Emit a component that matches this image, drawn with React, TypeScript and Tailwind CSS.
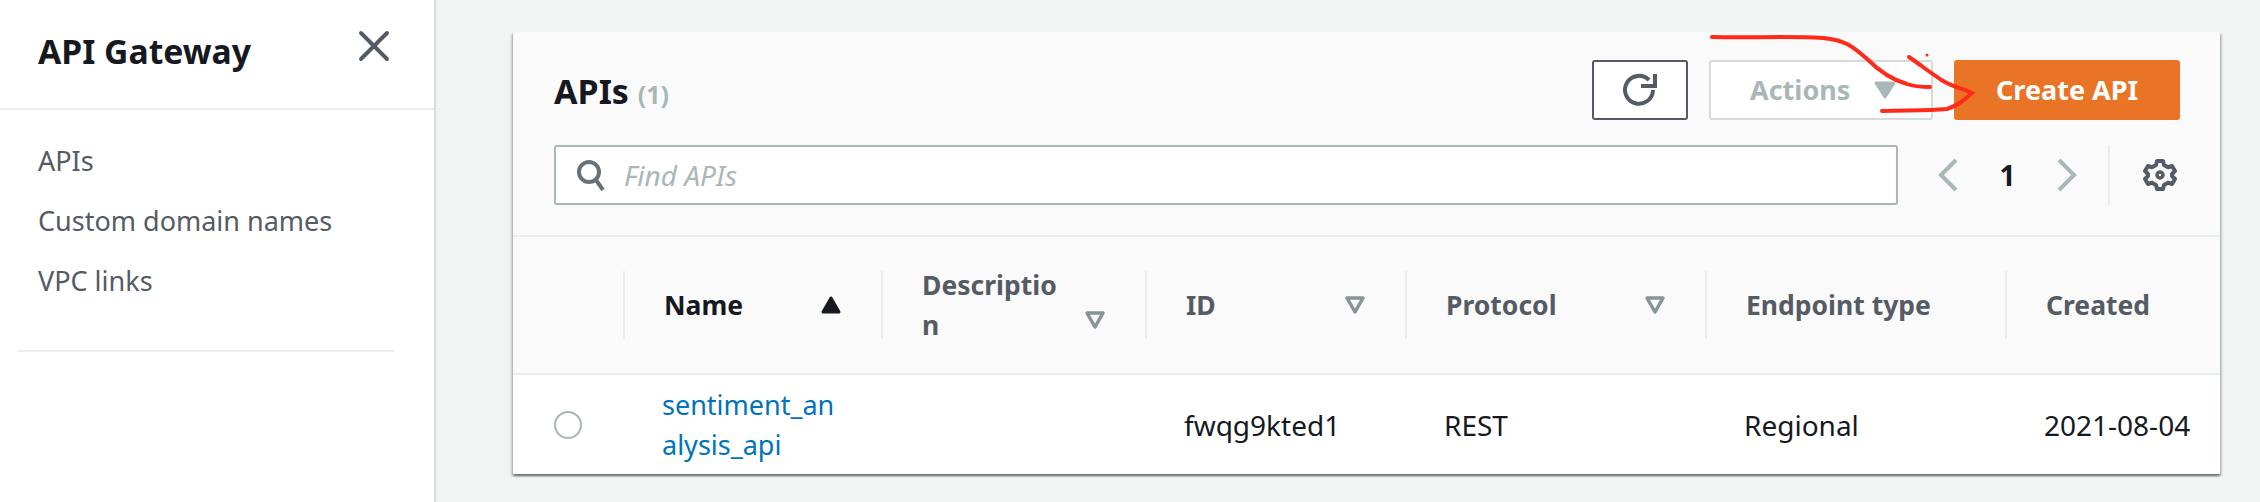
import { X } from "lucide-react";

const font = "font-['Noto_Sans','Liberation_Sans',sans-serif]";

function SortIcon({ active }: { active?: boolean }) {
    if (active) {
        return (
            <svg width="22" height="20" viewBox="0 0 22 20" className="text-[#16191f]">
                <path d="M11 3 L19 17 H3 Z" fill="currentColor" stroke="currentColor" strokeWidth="3" strokeLinejoin="round" />
            </svg>
        );
    }
    return (
        <svg width="22" height="20" viewBox="0 0 22 20" className="text-[#879596]">
            <path d="M3 3 H19 L11 17 Z" fill="none" stroke="currentColor" strokeWidth="3.5" strokeLinejoin="round" />
        </svg>
    );
}

function HeaderCell({ label, sort, dark, wrap }: { label: string, sort?: boolean, dark?: boolean, wrap?: boolean }) {
    return (
        <div className="flex h-[68px] items-center border-l-2 border-[#eaeded] pl-[39px] pr-[39px]">
            <span className={`${wrap ? "w-[140px] break-all" : ""} ${dark ? "text-[#16191f]" : "text-[#545b64]"} text-[26.5px] leading-[40px] font-bold`}>
                {label}
            </span>
            {sort && (
                <span className={`ml-auto ${wrap ? "mt-[30px]" : ""}`}>
                    <SortIcon active={dark} />
                </span>
            )}
        </div>
    );
}

function Annotation() {
    return (
        <svg width="2260" height="502" viewBox="0 0 2260 502" className="pointer-events-none absolute top-0 left-0">
            <path
                d="M1712 37 C1750 38 1790 36 1823 38 C1845 40 1852 46 1866 58 C1880 72 1892 80 1907 84 C1915 87 1922 87 1930 87"
                fill="none"
                stroke="#ff2a1a"
                strokeWidth="4"
                strokeLinecap="round"
            />
            <path
                d="M1909 57 C1922 66 1932 74 1943 81 C1953 87 1964 89 1972 93 C1964 100 1957 106 1947 109 C1925 111 1905 110 1882 111"
                fill="none"
                stroke="#ff2a1a"
                strokeWidth="4"
                strokeLinecap="round"
            />
            <circle cx="1927" cy="55" r="1.5" fill="#ff2a1a" />
        </svg>
    );
}

export default function App() {
    return (
        <div className={`${font} relative flex h-[502px] w-[2260px] overflow-hidden bg-[#f2f3f3]`}>
            <aside className="h-full w-[436px] shrink-0 border-r-2 border-[#d5dbdb] bg-white">
                <div className="flex h-[110px] items-start justify-between border-b-2 border-[#eaeded] pt-[29px] pr-[34px] pl-[38px]">
                    <h2 className="text-[33.7px] leading-[44px] font-bold text-[#16191f]">API Gateway</h2>
                    <X size={52} strokeWidth={1.8} className="-mt-[9px] text-[#545b64]" />
                </div>
                <nav className="mt-[31px] flex flex-col gap-[20px] pl-[38px] text-[27px] leading-[40px] text-[#545b64]">
                    <a>APIs</a>
                    <a>Custom domain names</a>
                    <a>VPC links</a>
                </nav>
                <div className="mt-[49px] ml-[18px] h-[2px] w-[376px] bg-[#eaeded]" />
            </aside>

            <main className="min-w-0 grow pt-[32px] pr-[38px] pl-[77px]">
                <section className="w-[1707px] bg-white shadow-[0_2px_2px_0_rgba(0,28,36,0.45),2px_2px_2px_0_rgba(0,28,36,0.15),-2px_2px_2px_0_rgba(0,28,36,0.15)]">
                    <div className="h-[205px] border-b-2 border-[#eaeded] bg-[#fafafa] pt-[28px] pr-[40px] pl-[41px]">
                        <div className="flex h-[60px] items-center">
                            <h1 className="mt-[3px] grow text-[34px] font-bold text-[#16191f]">
                                APIs <span className="text-[25px] font-bold text-[#aab7b8]">(1)</span>
                            </h1>
                            <button className="flex h-[60px] w-[96px] items-center justify-center rounded-[3px] border-2 border-[#545b64] bg-white">
                                <svg width="38" height="36" viewBox="0 0 38 36" fill="none" stroke="#545b64" strokeWidth="4">
                                    <path d="M28 8 A14 14 0 1 0 32 18" />
                                    <path d="M34 2 V14 H20" />
                                </svg>
                            </button>
                            <button className="ml-[21px] flex h-[60px] w-[224px] items-center gap-[22px] rounded-[3px] border-2 border-[#d5dbdb] bg-white pl-[39px] text-[27px] font-bold text-[#aab7b8]">
                                Actions
                                <svg width="26" height="22" viewBox="0 0 26 22">
                                    <path d="M4 4 H22 L13 18 Z" fill="currentColor" stroke="currentColor" strokeWidth="3" strokeLinejoin="round" />
                                </svg>
                            </button>
                            <button className="ml-[21px] h-[60px] w-[226px] rounded-[3px] bg-[#ea7426] text-[27px] font-bold text-white">
                                Create API
                            </button>
                        </div>
                        <div className="mt-[25px] flex h-[60px] items-center">
                            <div className="flex h-[60px] w-[1344px] items-center rounded-[3px] border-2 border-[#aab7b8] bg-white pl-[20px]">
                                <svg width="30" height="32" viewBox="0 0 30 32" fill="none" stroke="#687078" strokeWidth="4">
                                    <circle cx="13" cy="13" r="10" />
                                    <path d="M20 21 L27 31" />
                                </svg>
                                <span className="ml-[18px] text-[28px] text-[#aab7b8] italic">Find APIs</span>
                            </div>
                            <svg width="22" height="34" viewBox="0 0 22 34" fill="none" stroke="#aab7b8" strokeWidth="4" className="ml-[39px]">
                                <path d="M19 2 L4 17 L19 32" />
                            </svg>
                            <span className="w-[97px] text-center text-[28px] font-bold text-[#16191f]">1</span>
                            <svg width="22" height="34" viewBox="0 0 22 34" fill="none" stroke="#aab7b8" strokeWidth="4">
                                <path d="M3 2 L18 17 L3 32" />
                            </svg>
                            <div className="ml-[30px] h-[60px] w-[2px] bg-[#eaeded]" />
                            <svg width="34" height="34" viewBox="0 0 34 34" fill="none" stroke="#545b64" strokeWidth="4" strokeLinejoin="round" className="ml-[33px]">
                                <path d="M14 3 H20 L21 7 L25 9.3 L29 8 L32 13 L29 16 V18 L32 21 L29 26 L25 24.7 L21 27 L20 31 H14 L13 27 L9 24.7 L5 26 L2 21 L5 18 V16 L2 13 L5 8 L9 9.3 L13 7 Z" />
                                <circle cx="17" cy="17" r="3" strokeWidth="3.5" />
                            </svg>
                        </div>
                    </div>

                    <div className="grid grid-cols-[110px_258px_264px_260px_300px_300px_215px] items-center border-b-2 border-[#eaeded] bg-[#fafafa] py-[34px]">
                        <div />
                        <HeaderCell label="Name" sort dark />
                        <HeaderCell label="Description" sort wrap />
                        <HeaderCell label="ID" sort />
                        <HeaderCell label="Protocol" sort />
                        <HeaderCell label="Endpoint type" />
                        <HeaderCell label="Created" />
                    </div>

                    <div className="grid h-[99px] grid-cols-[110px_258px_264px_260px_300px_300px_215px] items-center text-[28px] text-[#16191f]">
                        <div className="pl-[41px]">
                            <div className="h-[28px] w-[28px] rounded-full border-2 border-[#aab7b8] bg-white" />
                        </div>
                        <a className="w-[219px] pl-[39px] text-[27px] leading-[40px] break-all text-[#0073bb]">sentiment_analysis_api</a>
                        <div />
                        <div className="pl-[39px]">fwqg9kted1</div>
                        <div className="pl-[39px]">REST</div>
                        <div className="pl-[39px]">Regional</div>
                        <div className="pl-[39px]">2021-08-04</div>
                    </div>
                </section>
            </main>

            <Annotation />
        </div>
    );
}
